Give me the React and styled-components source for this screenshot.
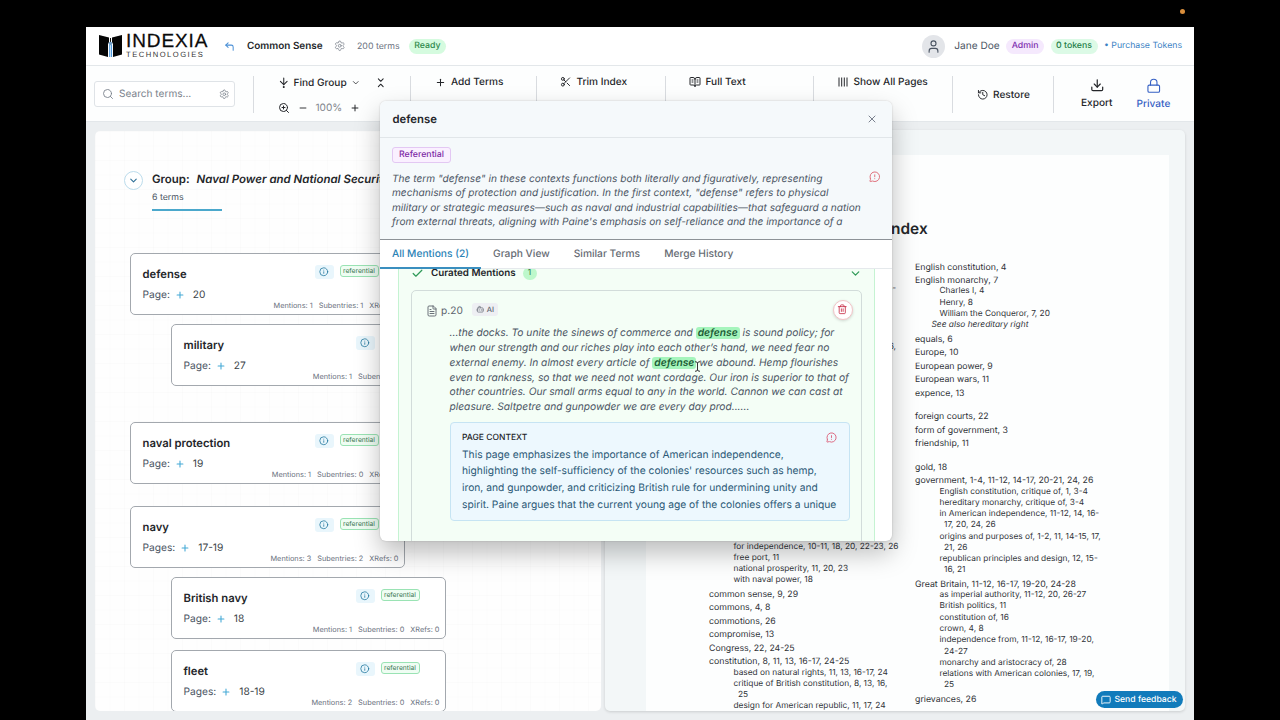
import React from 'react'
import styled, { createGlobalStyle } from 'styled-components'
import {
  ArrowDownToDot, BookOpenText, Bot, Check, ChevronDown, ChevronsDownUp, CornerUpLeft, Download,
  FileText, History, Info, Lock, MessageCircleWarning, MessageSquare, Minus, Plus, Scissors,
  Search, Settings, Trash2, User, X, ZoomIn,
} from 'lucide-react'

const family = [
  [
    { name: 'defense', label: 'Page:', pages: '20', m: 1, s: 1, x: 0 },
    { name: 'military', label: 'Page:', pages: '27', m: 1, s: 0, x: 0, sub: true, gap: 9 },
  ],
  [{ name: 'naval protection', label: 'Page:', pages: '19', m: 1, s: 0, x: 0 }],
  [
    { name: 'navy', label: 'Pages:', pages: '17-19', m: 3, s: 2, x: 0 },
    { name: 'British navy', label: 'Page:', pages: '18', m: 1, s: 0, x: 0, sub: true, gap: 9 },
    { name: 'fleet', label: 'Pages:', pages: '18-19', m: 2, s: 0, x: 0, sub: true, gap: 11 },
  ],
]

const leftColumn = [
  ['sub', 'for independence, 10-11, 18, 20, 22-23, 26'],
  ['sub', 'free port, 11'],
  ['sub', 'national prosperity, 11, 20, 23'],
  ['sub', 'with naval power, 18'],
  ['main', 'common sense, 9, 29'],
  ['main', 'commons, 4, 8'],
  ['main', 'commotions, 26'],
  ['main', 'compromise, 13'],
  ['main', 'Congress, 22, 24-25'],
  ['main', 'constitution, 8, 11, 13, 16-17, 24-25'],
  ['sub', 'based on natural rights, 11, 13, 16-17, 24'],
  ['sub', 'critique of British constitution, 8, 13, 16,'],
  ['cont', '25'],
  ['sub', 'design for American republic, 11, 17, 24'],
]

const rightColumn = [
  ['main', 'English constitution, 4'],
  ['main', 'English monarchy, 7'],
  ['sub', 'Charles I, 4'],
  ['sub', 'Henry, 8'],
  ['sub', 'William the Conqueror, 7, 20'],
  ['see', 'See also hereditary right'],
  ['main', 'equals, 6'],
  ['main', 'Europe, 10'],
  ['main', 'European power, 9'],
  ['main', 'European wars, 11'],
  ['main', 'expence, 13'],
  ['letter', 'foreign courts, 22'],
  ['main', 'form of government, 3'],
  ['main', 'friendship, 11'],
  ['letter', 'gold, 18'],
  ['main', 'government, 1-4, 11-12, 14-17, 20-21, 24, 26'],
  ['sub', 'English constitution, critique of, 1, 3-4'],
  ['sub', 'hereditary monarchy, critique of, 3-4'],
  ['sub', 'in American independence, 11-12, 14, 16-'],
  ['cont', '17, 20, 24, 26'],
  ['sub', 'origins and purposes of, 1-2, 11, 14-15, 17,'],
  ['cont', '21, 26'],
  ['sub', 'republican principles and design, 12, 15-'],
  ['cont', '16, 21'],
  ['main', 'Great Britain, 11-12, 16-17, 19-20, 24-28'],
  ['sub', 'as imperial authority, 11-12, 20, 26-27'],
  ['sub', 'British politics, 11'],
  ['sub', 'constitution of, 16'],
  ['sub', 'crown, 4, 8'],
  ['sub', 'independence from, 11-12, 16-17, 19-20,'],
  ['cont', '24-27'],
  ['sub', 'monarchy and aristocracy of, 28'],
  ['sub', 'relations with American colonies, 17, 19,'],
  ['cont', '25'],
  ['main', 'grievances, 26'],
]

const Logo = () => (
  <LogoWrap>
    <svg width="25" height="26" viewBox="0 0 25 26">
      <path d="M1 2 L11 4.5 V9 L10 11 V24 L1 21.5Z" fill="#050505" />
      <path d="M24 2 L14 4.5 V9 L15 11 V24 L24 21.5Z" fill="#050505" />
      <path d="M12.5 5 V9" stroke="#111" strokeWidth="1" />
      <circle cx="12.5" cy="10.5" r="1.8" fill="#6f9fc8" />
      <path d="M11.7 12 V24 M13.5 12 V24" stroke="#4f9be0" strokeWidth="1.1" />
    </svg>
    <LogoText>
      <strong>INDEXIA</strong>
      <span>TECHNOLOGIES</span>
    </LogoText>
  </LogoWrap>
)

const TermCard = ({ term }) => (
  <Card $sub={term.sub} $gap={term.gap}>
    <CardTop>
      <CardTitle>{term.name}</CardTitle>
      <InfoButton><Info size={9.5} strokeWidth={2} /></InfoButton>
      <Tag>referential</Tag>
    </CardTop>
    <CardPages>{term.label}<Plus size={10} strokeWidth={2.6} /><span>{term.pages}</span></CardPages>
    <CardStats>
      <span>Mentions: {term.m}</span>
      <span>Subentries: {term.s}</span>
      <span>XRefs: {term.x}</span>
    </CardStats>
  </Card>
)

const Entries = ({ rows }) => rows.map(([kind, text], i) => (
  <Entry key={i} $kind={kind}>{text}</Entry>
))

const TermModal = () => (
  <Modal>
    <ModalHeader>
      <h2>defense</h2>
      <X size={12} strokeWidth={1.8} />
    </ModalHeader>
    <Summary>
      <Badge>Referential</Badge>
      <SummaryRow>
        <p>
          The term "defense" in these contexts functions both literally and figuratively, representing<br />
          mechanisms of protection and justification. In the first context, "defense" refers to physical<br />
          military or strategic measures—such as naval and industrial capabilities—that safeguard a nation<br />
          from external threats, aligning with Paine's emphasis on self-reliance and the importance of a
        </p>
        <MessageCircleWarning size={11.5} strokeWidth={2} />
      </SummaryRow>
    </Summary>
    <Tabs>
      <Tab $active>All Mentions (2)</Tab>
      <Tab>Graph View</Tab>
      <Tab>Similar Terms</Tab>
      <Tab>Merge History</Tab>
    </Tabs>
    <ModalBody>
      <Curated>
        <CuratedHead>
          <Check size={13} strokeWidth={2.2} />
          <h3>Curated Mentions</h3>
          <Count>1</Count>
          <ChevronDown size={13} strokeWidth={2.3} />
        </CuratedHead>
        <Mention>
          <MentionHead>
            <FileText size={12} strokeWidth={1.8} />
            <span>p.20</span>
            <AiTag><Bot size={8.5} strokeWidth={1.8} />AI</AiTag>
            <DeleteButton><Trash2 size={10.5} strokeWidth={2} /></DeleteButton>
          </MentionHead>
          <Quote>
            ...the docks. To unite the sinews of commerce and <mark>defense</mark> is sound policy; for<br />
            when our strength and our riches play into each other’s hand, we need fear no<br />
            external enemy. In almost every article of <mark>defense</mark> we abound. Hemp flourishes<br />
            even to rankness, so that we need not want cordage. Our iron is superior to that of<br />
            other countries. Our small arms equal to any in the world. Cannon we can cast at<br />
            pleasure. Saltpetre and gunpowder we are every day prod......
          </Quote>
          <Context>
            <ContextHead>PAGE CONTEXT<MessageCircleWarning size={11} strokeWidth={2} /></ContextHead>
            <p>
              This page emphasizes the importance of American independence,<br />
              highlighting the self-sufficiency of the colonies' resources such as hemp,<br />
              iron, and gunpowder, and criticizing British rule for undermining unity and<br />
              spirit. Paine argues that the current young age of the colonies offers a unique
            </p>
          </Context>
        </Mention>
      </Curated>
    </ModalBody>
  </Modal>
)

const App = () => {
  return (
    <Screen>
      <GlobalStyle />
      <RecordingDot />
      <Window>
        <Header>
          <Logo />
          <BackIcon><CornerUpLeft size={11} strokeWidth={2.2} /></BackIcon>
          <DocTitle>Common Sense</DocTitle>
          <Settings size={11.5} strokeWidth={1.6} color="#7b828c" />
          <TermCount>200 terms</TermCount>
          <Pill $bg="#d5fbdf" $color="#2f8a4c">Ready</Pill>
          <Account>
            <Avatar><User size={15} strokeWidth={1.8} /></Avatar>
            <UserName>Jane Doe</UserName>
            <Pill $bg="#f5e9fd" $color="#8030b0">Admin</Pill>
            <Pill $bg="#dcfae6" $color="#25804a" $wide>0 tokens</Pill>
            <Purchase>• Purchase Tokens</Purchase>
          </Account>
        </Header>
        <Toolbar>
          <Group>
            <SearchBox>
              <Search size={12} strokeWidth={1.8} />
              <span>Search terms...</span>
              <Settings size={10.5} strokeWidth={1.8} />
            </SearchBox>
          </Group>
          <Group $line $pad={23.5}>
            <Tool $gap={4.5} $low>
              <ArrowDownToDot size={11.5} strokeWidth={2.2} />Find Group
              <ChevronDown size={9.5} strokeWidth={2} />
              <Collapse><ChevronsDownUp size={11.5} strokeWidth={2.2} /></Collapse>
            </Tool>
            <Tool $gap={8} $low>
              <ZoomIn size={12} strokeWidth={2} />
              <Minus size={10} strokeWidth={2.2} />
              <Percent>100%</Percent>
              <Plus size={10} strokeWidth={2.4} />
            </Tool>
          </Group>
          <Group $line $pad={24}>
            <Tool $gap={5}><Plus size={11} strokeWidth={2.2} />Add Terms</Tool>
          </Group>
          <Group $line $pad={23}>
            <Tool $gap={5}><Scissors size={11.5} strokeWidth={2} />Trim Index</Tool>
          </Group>
          <Group $line $pad={23}>
            <Tool $gap={4.5}><BookOpenText size={12} strokeWidth={2} />Full Text</Tool>
          </Group>
          <Group $line $pad={24}>
            <Tool $gap={5.5}>
              <svg width="10" height="10" viewBox="0 0 10 10" stroke="#24262a" strokeWidth="1">
                <path d="M1 .5V9.5M3.7 .5V9.5M6.3 .5V9.5M9 .5V9.5" />
              </svg>
              Show All Pages
            </Tool>
          </Group>
          <Group $line $pad={24} $center>
            <Tool $gap={4.5}><History size={11.5} strokeWidth={2} />Restore</Tool>
          </Group>
          <Group $line $pad={27} $actions>
            <Action><Download size={14.5} strokeWidth={2} />Export</Action>
            <Action $blue><Lock size={15.5} strokeWidth={1.7} />Private</Action>
          </Group>
        </Toolbar>
        <Workspace>
          <TermPanel>
            <GroupHead>
              <Toggle><ChevronDown size={11} strokeWidth={2.4} /></Toggle>
              <div>
                <GroupTitle>Group:<em>Naval Power and National Security</em></GroupTitle>
                <GroupCount>6 terms</GroupCount>
                <GroupBar />
              </div>
            </GroupHead>
            {family.map((cards, i) => (
              <Family key={i} $gap={[0, 36, 22][i]}>
                {cards.map((term) => <TermCard key={term.name} term={term} />)}
              </Family>
            ))}
          </TermPanel>
          <PreviewPanel>
            <Paper>
              <PaperTitle>Index</PaperTitle>
              <Columns>
                <Column>
                  <Tail $height={35}>16-</Tail>
                  <Tail $height={57.6}>16,</Tail>
                  <Spacer />
                  <Entries rows={leftColumn} />
                </Column>
                <Column>
                  <Entries rows={rightColumn} />
                </Column>
              </Columns>
            </Paper>
          </PreviewPanel>
        </Workspace>
        <Feedback><MessageSquare size={10} strokeWidth={2.2} />Send feedback</Feedback>
      </Window>
      <TermModal />
      <Cursor width="7" height="11" viewBox="0 0 7 11">
        <path d="M1 .7Q3.5 .7 3.5 2.2Q3.5 .7 6 .7M3.5 2V9M1 10.3Q3.5 10.3 3.5 8.8Q3.5 10.3 6 10.3" fill="none" stroke="#333" strokeWidth="1" />
      </Cursor>
    </Screen>
  )
}

const GlobalStyle = createGlobalStyle`
  * {
    box-sizing: border-box;
    margin: 0;
    padding: 0;
  }

  body {
    background: #000;
    overflow: hidden;
    font-family: Inter, "Liberation Sans", sans-serif;
    color: #24262a;
    text-rendering: geometricPrecision;
  }

  svg {
    flex-shrink: 0;
    display: block;
  }
`;

const Screen = styled.div`
  position: relative;
  width: 1280px;
  height: 720px;
  padding: 27px 86px 0 86px;
  overflow: hidden;
  background: #000;
  white-space: nowrap;
`;

const RecordingDot = styled.i`
  position: absolute;
  top: 9px;
  right: 95px;
  width: 5px;
  height: 5px;
  border-radius: 50%;
  background: #d98e3c;
`;

const Window = styled.div`
  position: relative;
  display: flex;
  flex-direction: column;
  width: 1108px;
  height: 693px;
  background: #eceff1;
`;

const Header = styled.header`
  display: flex;
  align-items: center;
  height: 39px;
  padding: 0 12px 0 12px;
  background: #fff;
  border-bottom: 1px solid #e3e7ea;
`;

const LogoWrap = styled.div`
  display: flex;
  align-items: center;
  gap: 3px;
  width: 125.5px;
`;

const LogoText = styled.div`
  display: flex;
  flex-direction: column;
  font-family: "Liberation Sans", Arial, sans-serif;
  color: #0a0a0a;

  strong {
    font-size: 19px;
    font-weight: 400;
    line-height: 17px;
    letter-spacing: 0.9px;
    -webkit-text-stroke: 0.25px #0a0a0a;
  }

  span {
    font-size: 7.6px;
    line-height: 9px;
    letter-spacing: 1.5px;
    color: #333;
  }
`;

const BackIcon = styled.div`
  color: #4a8fd6;
  margin-right: 12.5px;
`;

const DocTitle = styled.h1`
  font-size: 9.95px;
  font-weight: 600;
  width: 87px;
`;

const TermCount = styled.span`
  margin: 0 9px 0 11.5px;
  font-size: 8.8px;
  color: #6b7280;
`;

const Pill = styled.span`
  padding: 0 5.5px;
  border-radius: 8px;
  font-size: 8.75px;
  font-weight: 500;
  line-height: 15px;
  background: ${({ $bg }) => $bg};
  color: ${({ $color }) => $color};
  margin-left: ${({ $wide }) => ($wide ? '6.5px' : '0')};
`;

const Account = styled.div`
  display: flex;
  align-items: center;
  margin-left: auto;
`;

const Avatar = styled.div`
  display: grid;
  place-items: center;
  width: 23px;
  height: 23px;
  border-radius: 50%;
  background: #e3e5e9;
  color: #4b5563;
`;

const UserName = styled.span`
  margin: 0 6.5px 0 9px;
  font-size: 10.15px;
  color: #4b5563;
`;

const Purchase = styled.span`
  margin-left: 6.5px;
  font-size: 8.72px;
  color: #3b82c4;
`;

const Toolbar = styled.div`
  display: grid;
  grid-template-columns: 167px 157px 126px 129px 148px 139px 101px 141px;
  height: 56px;
  padding: 10px 0;
  background: #fdfefe;
  border-bottom: 1px solid #e3e7ea;
`;

const Group = styled.div`
  display: flex;
  flex-direction: ${({ $actions }) => ($actions ? 'row' : 'column')};
  justify-content: ${({ $center }) => ($center ? 'center' : 'flex-start')};
  gap: ${({ $actions }) => ($actions ? '24px' : '13px')};
  padding-left: ${({ $pad }) => $pad || 8}px;
  border-left: ${({ $line }) => ($line ? '1px solid #d9dce0' : 'none')};
`;

const SearchBox = styled.div`
  display: flex;
  align-items: center;
  width: 141px;
  height: 26px;
  margin-top: 5px;
  padding: 0 5px 0 7px;
  border: 1px solid #dfe3e7;
  border-radius: 3px;
  background: #fff;
  color: #7b828c;

  span {
    flex: 1;
    margin-left: 5px;
    font-size: 10.1px;
  }
`;

const Tool = styled.div`
  display: flex;
  align-items: center;
  gap: ${({ $gap }) => $gap}px;
  height: 12px;
  padding-top: ${({ $low }) => ($low ? 1 : 0)}px;
  font-size: 10.1px;
  font-weight: 500;
`;

const Collapse = styled.div`
  margin-left: 9.5px;
`;

const Percent = styled.span`
  font-weight: 400;
  color: #80858d;
`;

const Action = styled.div`
  display: flex;
  flex-direction: column;
  align-items: center;
  gap: 4.5px;
  padding-top: 1.5px;
  font-size: 10.1px;
  font-weight: 500;
  color: ${({ $blue }) => ($blue ? '#3560c4' : '#24262a')};
`;

const Workspace = styled.main`
  display: flex;
  flex: 1;
  gap: 4px;
  padding: 9px 9px 9px 8.5px;
  min-height: 0;
`;

const TermPanel = styled.section`
  width: 506px;
  padding: 40px 0 0 35.5px;
  border-radius: 5px;
  overflow: hidden;
  background-color: #fefefe;
  background-image:
    linear-gradient(rgba(0, 0, 0, 0.01) 1px, transparent 1px),
    linear-gradient(90deg, rgba(0, 0, 0, 0.01) 1px, transparent 1px);
  background-size: 14.5px 14.5px;
`;

const GroupHead = styled.div`
  display: flex;
  gap: 9px;
  height: 82px;
  margin-left: -6px;
`;

const Toggle = styled.div`
  display: grid;
  place-items: center;
  width: 19px;
  height: 19px;
  border: 1px solid #bcdcec;
  border-radius: 50%;
  background: #fff;
  color: #2f7098;
`;

const GroupTitle = styled.h2`
  font-size: 11.45px;
  font-weight: 600;
  line-height: 17px;

  em {
    margin-left: 7px;
  }
`;

const GroupCount = styled.p`
  margin-top: 3px;
  font-size: 8.8px;
  line-height: 14px;
  color: #4b5563;
`;

const GroupBar = styled.div`
  width: 70px;
  height: 2px;
  margin-top: 4px;
  background: #4ba8cc;
`;

const Family = styled.div`
  margin-top: ${({ $gap }) => $gap}px;
`;

const Card = styled.article`
  width: 275px;
  height: 62px;
  margin-top: ${({ $gap }) => $gap || 0}px;
  margin-left: ${({ $sub }) => ($sub ? 41 : 0)}px;
  padding: 11px 5.5px 0 11.5px;
  border: 1px solid #a3a8ae;
  border-radius: 5px;
  background: #fff;
`;

const CardTop = styled.div`
  display: flex;
  height: 17px;
  padding-right: 20px;
`;

const CardTitle = styled.h3`
  flex: 1;
  font-size: 11.25px;
  font-weight: 600;
  line-height: 18px;
`;

const InfoButton = styled.div`
  display: grid;
  place-items: center;
  width: 19px;
  height: 14px;
  margin-right: 6px;
  border-radius: 3px;
  background: #e9f6fc;
  color: #23789f;
`;

const Tag = styled.span`
  width: 39px;
  height: 12px;
  border: 1px solid #9ae3b4;
  border-radius: 3px;
  background: #effdf3;
  text-align: center;
  font-size: 6.7px;
  line-height: 10px;
  color: #3b7753;
`;

const CardPages = styled.div`
  display: flex;
  align-items: center;
  margin-top: 6px;
  font-size: 10.2px;
  line-height: 14px;
  color: #4b5563;

  svg {
    margin: 0 8px 0 5px;
    color: #45a9d6;
  }

  span {
    color: #3a3f47;
  }
`;

const CardStats = styled.div`
  display: flex;
  justify-content: flex-end;
  gap: 6px;
  margin-top: -1px;
  font-size: 7.35px;
  line-height: 10px;
  color: #6b7280;
`;

const PreviewPanel = styled.section`
  flex: 1;
  margin-top: -1px;
  padding: 25px 16px 0 41px;
  border-radius: 5px;
  overflow: hidden;
  background: #f3f7f8;
  box-shadow: 0 1px 3px rgba(0, 0, 0, 0.14);
`;

const Paper = styled.div`
  height: 100%;
  padding: 63px 0 0 63.5px;
  background: #fdfefe;
`;

const PaperTitle = styled.h2`
  height: 41.4px;
  margin-left: -63.5px;
  text-align: center;
  font-size: 15.4px;
  font-weight: 600;
  line-height: 22px;
`;

const Columns = styled.div`
  display: grid;
  grid-template-columns: 206px 1fr;
`;

const Column = styled.div`
  color: #303338;
`;

const indent = { main: 0, letter: 0, sub: 24.5, cont: 29, see: 16.5 }

const Entry = styled.p`
  margin-top: ${({ $kind }) => ($kind === 'main' ? 2.23 : $kind === 'letter' ? 12.4 : 0)}px;
  padding-left: ${({ $kind }) => indent[$kind]}px;
  font-size: ${({ $kind }) => ($kind === 'main' || $kind === 'letter' ? 8.78 : 8.33)}px;
  font-style: ${({ $kind }) => ($kind === 'see' ? 'italic' : 'normal')};
  line-height: 11.27px;
`;

const Tail = styled.p`
  width: 187px;
  height: ${({ $height }) => $height}px;
  text-align: right;
  font-size: 8.4px;
  display: flex;
  justify-content: flex-end;
  align-items: flex-end;
`;

const Spacer = styled.div`
  height: 189.6px;
`;

const Feedback = styled.div`
  position: absolute;
  right: 11.5px;
  bottom: 12px;
  display: flex;
  align-items: center;
  gap: 3px;
  height: 17px;
  padding: 0 6px 0 5px;
  border-radius: 9px;
  background: #117bbb;
  color: #fff;
  font-size: 8.65px;
  font-weight: 500;
`;

const Modal = styled.div`
  position: absolute;
  top: 101px;
  left: 380px;
  display: flex;
  flex-direction: column;
  width: 512px;
  height: 440px;
  border-radius: 6px;
  overflow: hidden;
  background: #fff;
  box-shadow: 0 12px 26px rgba(0, 0, 0, 0.26), 0 0 2px rgba(0, 0, 0, 0.2);
`;

const ModalHeader = styled.div`
  display: flex;
  align-items: center;
  justify-content: space-between;
  height: 37px;
  padding: 0 14.5px 0 12.5px;
  border-bottom: 1px solid #e1e6e9;
  background: #f5f9fb;

  h2 {
    font-size: 11.3px;
    font-weight: 600;
  }

  svg {
    color: #6b7280;
  }
`;

const Summary = styled.div`
  height: 102px;
  padding: 9px 11.5px 0 12px;
  background: #f5f9fb;
  border-bottom: 1px solid #8d9297;
`;

const Badge = styled.span`
  display: block;
  width: 59px;
  height: 16px;
  border: 1px solid #e3c8f3;
  border-radius: 3px;
  background: #faf0ff;
  text-align: center;
  font-size: 8.8px;
  font-weight: 500;
  line-height: 14px;
  color: #7e2ba6;
`;

const SummaryRow = styled.div`
  display: flex;
  justify-content: space-between;
  margin-top: 9.3px;

  p {
    font-size: 10.13px;
    font-style: italic;
    line-height: 14.15px;
    color: #4b5563;
  }

  svg {
    margin-top: -1px;
    color: #df6d78;
  }
`;

const Tabs = styled.div`
  display: flex;
  height: 29px;
  border-bottom: 1px solid #e5e9ec;
`;

const Tab = styled.div`
  height: 28.5px;
  padding: 0 12px;
  font-size: 10.22px;
  font-weight: 500;
  line-height: 28px;
  color: ${({ $active }) => ($active ? '#2b83b6' : '#666b73')};
  border-bottom: ${({ $active }) => ($active ? '2px solid #3a8fbf' : 'none')};
`;

const ModalBody = styled.div`
  flex: 1;
  min-height: 0;
  padding: 0 17px 0 18px;
  overflow: hidden;
`;

const Curated = styled.div`
  height: 290px;
  padding: 0 12px;
  border: 1px solid #c5f3d2;
  border-top: none;
  background: #f4fef6;
`;

const CuratedHead = styled.div`
  display: flex;
  align-items: center;
  height: 20.5px;
  padding-bottom: 11px;

  svg {
    color: #2f9a58;
  }

  h3 {
    margin: 0 7px 0 7px;
    font-size: 9.8px;
    font-weight: 600;
  }

  svg:last-child {
    margin-left: auto;
    margin-right: 0.5px;
  }
`;

const Count = styled.span`
  width: 14px;
  border-radius: 7px;
  background: #bdf8cb;
  text-align: center;
  font-size: 8.5px;
  line-height: 13px;
  color: #2d7a48;
`;

const Mention = styled.div`
  height: 280px;
  padding: 12.7px 11.5px 0 37.5px;
  border: 1px solid #d2dcda;
  border-radius: 5px;
`;

const MentionHead = styled.div`
  display: flex;
  align-items: center;
  height: 15px;
  margin-left: -23.5px;
  color: #5b626c;

  > span:nth-child(2) {
    margin-left: 3px;
    font-size: 10.2px;
  }
`;

const AiTag = styled.span`
  display: flex;
  align-items: center;
  gap: 2.5px;
  height: 13px;
  margin: -3px 0 0 9px;
  padding: 0 4px;
  border-radius: 3px;
  background: #eeeff3;
  font-size: 7.4px;
  font-weight: 500;
`;

const DeleteButton = styled.div`
  display: grid;
  place-items: center;
  width: 20px;
  height: 20px;
  margin: -2px -3px 0 auto;
  border: 1px solid #f3c5c8;
  border-radius: 50%;
  background: #fff;
  color: #c9364e;
  box-shadow: 0 1px 3px rgba(0, 0, 0, 0.16);
`;

const Quote = styled.p`
  margin-top: 8.3px;
  font-size: 10.23px;
  font-style: italic;
  line-height: 14.67px;
  color: #4b5563;

  mark {
    padding: 0 2px;
    border-radius: 3px;
    background: #a5f5bc;
    font-weight: 600;
    color: #1d5c36;
  }
`;

const Context = styled.div`
  height: 99.5px;
  margin-top: 7px;
  padding: 9.8px 12px 0 11.5px;
  border: 1px solid #c6e4f3;
  border-radius: 4px;
  background: #edf8fe;

  p {
    margin-top: 3.2px;
    font-size: 10.26px;
    line-height: 16.75px;
    color: #2b5876;
  }
`;

const ContextHead = styled.div`
  display: flex;
  align-items: center;
  justify-content: space-between;
  height: 11px;
  font-size: 8.5px;
  font-weight: 500;

  svg {
    color: #dc5f78;
  }
`;

const Cursor = styled.svg`
  position: absolute;
  top: 361px;
  left: 694px;
`;

export default App
